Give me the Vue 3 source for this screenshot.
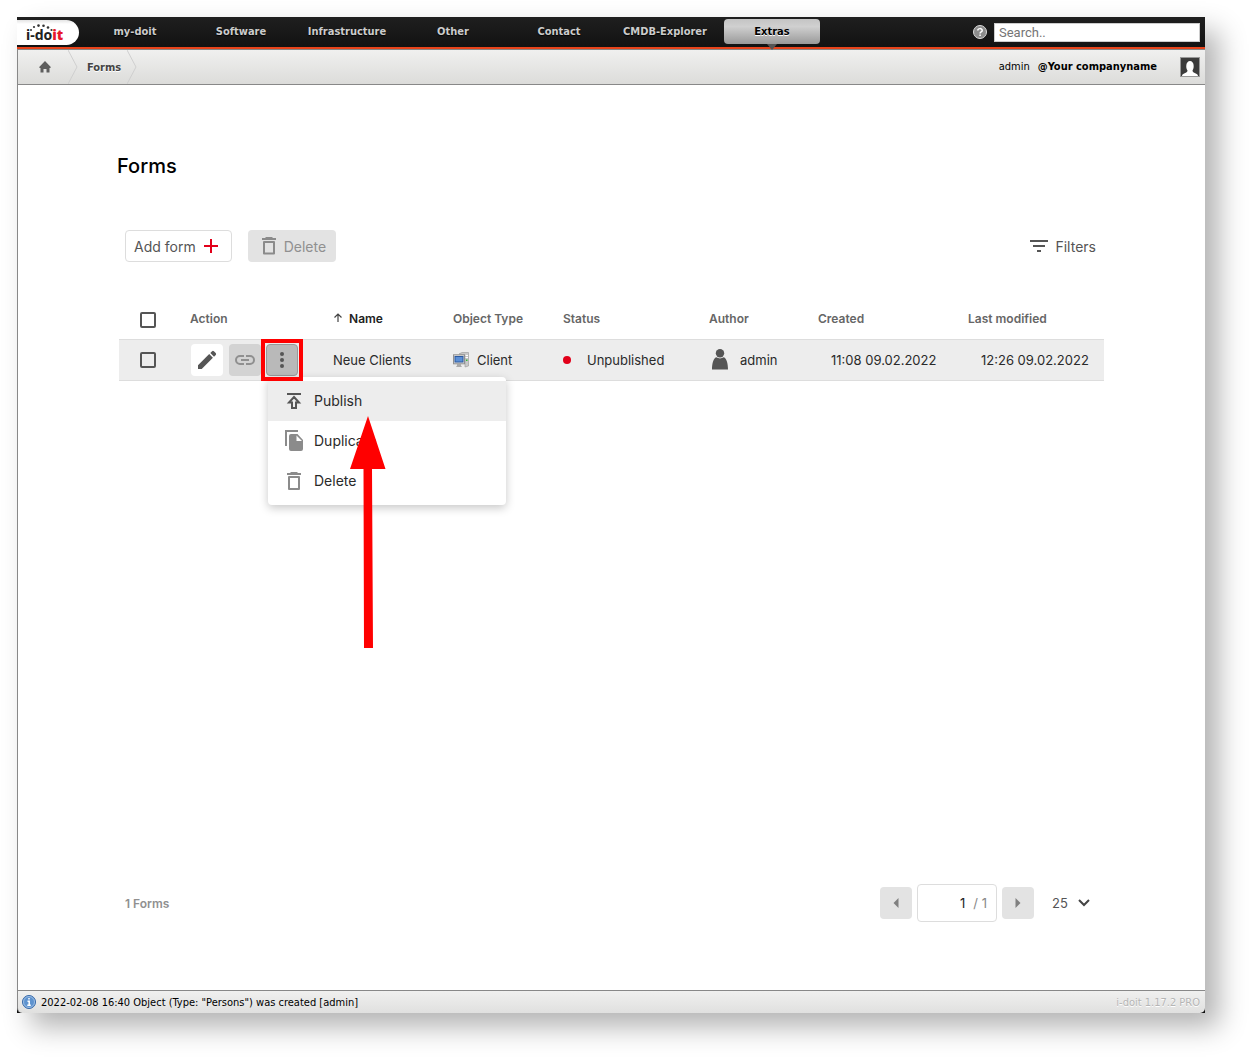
<script setup>
import { ref } from 'vue'

const navItems = ['my-doit', 'Software', 'Infrastructure', 'Other', 'Contact', 'CMDB-Explorer', 'Extras']
const activeItem = 'Extras'

const forms = [
  {
    name: 'Neue Clients',
    type: 'Client',
    status: 'Unpublished',
    author: 'admin',
    created: '11:08 09.02.2022',
    modified: '12:26 09.02.2022',
  },
]

const search = ref('')
const page = ref('1')
const pageSize = ref('25')
const menuOpen = ref(true)
</script>

<template>
  <div class="screen">
    <div class="app">
      <header class="topbar">
        <a class="logo" href="#" aria-label="i-doit">
          <svg class="logo-dots" width="26" height="8" viewBox="0 0 26 8" aria-hidden="true">
            <g fill="#333">
              <circle cx="3" cy="6" r="1" />
              <circle cx="6" cy="3" r="1.1" />
              <circle cx="10.500" cy="1.600" r="1.300" />
              <circle cx="15.500" cy="1.800" r="1.300" />
              <circle cx="20" cy="3.500" r="1.300" />
              <circle cx="23.500" cy="6" r="1.100" />
            </g>
          </svg>
          <span>i-do<b>it</b></span>
        </a>
        <nav class="nav">
          <a v-for="item in navItems" :key="item" href="#" :class="{ active: item === activeItem }">
            <span>{{ item }}</span>
          </a>
        </nav>
        <div class="tools">
          <button class="help" type="button" aria-label="Help">
            <svg width="14" height="14" viewBox="0 0 14 14">
              <circle cx="7" cy="7" r="6.500" fill="#8c8c8c" stroke="#dcdcdc" />
              <path d="M4.800 5.600C4.800 3 9.200 3 9.200 5.400C9.200 7 7.100 6.800 7.100 8.400M7.100 9.600V11" fill="none" stroke="#fff" stroke-width="1.500" />
            </svg>
          </button>
          <input v-model="search" class="search" type="text" placeholder="Search.." aria-label="Search" />
        </div>
      </header>

      <div class="crumbs">
        <a class="home" href="#" aria-label="Home">
          <svg width="12" height="12" viewBox="0 0 12 12">
            <path d="M6 0L12 6.200L11 7H10.500V11.500H7.500V8H4.500V11.500H1.500V7H1L0 6.200Z" fill="#5e5e5e" />
          </svg>
        </a>
        <svg class="sep" width="10" height="34" viewBox="0 0 10 34"><path d="M0 0L9 17L0 34" fill="none" stroke="#cfcfcf" /></svg>
        <a class="crumb" href="#">Forms</a>
        <svg class="sep" width="10" height="34" viewBox="0 0 10 34"><path d="M0 0L9 17L0 34" fill="none" stroke="#cfcfcf" /></svg>
        <div class="user">
          <span>admin</span>
          <strong>@Your companyname</strong>
          <svg width="20" height="20" viewBox="0 0 20 20">
            <rect x="0.500" y="0.500" width="19" height="19" fill="#3c3c3c" stroke="#999" />
            <path d="M2 19C2 16 7.500 16.500 7.500 13.500C5.500 11 5.800 4 10 4S14.500 11 12.500 13.500C12.500 16.500 18 16 18 19Z" fill="#fff" />
          </svg>
        </div>
      </div>

      <main class="main">
        <h1>Forms</h1>

        <div class="actions">
          <button class="btn add" type="button">
            Add form
            <svg width="14" height="14" viewBox="0 0 14 14"><path d="M7 0V14M0 7H14" stroke="#e2001a" stroke-width="2" /></svg>
          </button>
          <button class="btn remove" type="button" disabled>
            <svg width="14" height="18" viewBox="0 0 14 18">
              <path d="M4 0H10L11 1H14V3H0V1H3Z" fill="#8b8b8b" />
              <path d="M2 5H12V16.500H2Z" fill="none" stroke="#8b8b8b" stroke-width="2" stroke-linejoin="round" />
            </svg>
            Delete
          </button>
          <button class="filters" type="button">
            <svg width="18" height="12" viewBox="0 0 18 12"><path d="M0 1H18M3 6H15M7 11H11" stroke="#555" stroke-width="2" /></svg>
            Filters
          </button>
        </div>

        <div class="table-wrap">
          <table class="list">
            <colgroup>
              <col class="c-check" />
              <col class="c-action" />
              <col class="c-name" />
              <col class="c-type" />
              <col class="c-status" />
              <col class="c-author" />
              <col class="c-created" />
              <col />
            </colgroup>
            <thead>
              <tr>
                <th class="check"><input type="checkbox" aria-label="Select all" /></th>
                <th>Action</th>
                <th class="sorted">
                  <svg width="10" height="10" viewBox="0 0 10 10"><path d="M5 9V1M1.500 4.500L5 1L8.500 4.500" fill="none" stroke="#444" stroke-width="1.200" /></svg>
                  Name
                </th>
                <th>Object Type</th>
                <th>Status</th>
                <th>Author</th>
                <th>Created</th>
                <th>Last modified</th>
              </tr>
            </thead>
            <tbody>
              <tr v-for="form in forms" :key="form.name">
                <td class="check"><input type="checkbox" :aria-label="`Select ${form.name}`" /></td>
                <td>
                  <div class="row-actions">
                    <button class="icon-btn edit" type="button" aria-label="Edit">
                      <svg width="20" height="20" viewBox="0 0 20 20">
                        <path d="M1 15.300L12.200 4.100L15.900 7.800L4.700 19H1ZM13.300 3L15.100 1.200Q16 .500 16.900 1.300L18.700 3.100Q19.500 4 18.800 4.900L17 6.700Z" fill="#555" />
                      </svg>
                    </button>
                    <button class="icon-btn link" type="button" aria-label="Link" disabled>
                      <svg width="20" height="10" viewBox="0 0 20 10">
                        <path d="M9 1H5A4 4 0 0 0 5 9H9M11 1H15A4 4 0 0 1 15 9H11M6 5H14" fill="none" stroke="#8f8f8f" stroke-width="2" />
                      </svg>
                    </button>
                    <div class="more">
                      <button class="icon-btn dots" type="button" aria-label="More" @click="menuOpen = !menuOpen">
                        <svg width="4" height="16" viewBox="0 0 4 16"><g fill="#555"><circle cx="2" cy="2" r="2" /><circle cx="2" cy="8" r="2" /><circle cx="2" cy="14" r="2" /></g></svg>
                      </button>
                      <div v-if="menuOpen" class="menu">
                        <button class="hovered" type="button">
                          <svg width="18" height="20" viewBox="0 0 18 20">
                            <path d="M2 3H16" stroke="#555" stroke-width="2" />
                            <path d="M9 6L14 11.500H11V17H7V11.500H4Z" fill="none" stroke="#555" stroke-width="2" />
                          </svg>
                          Publish
                        </button>
                        <button type="button">
                          <svg width="18" height="21" viewBox="0 0 18 21">
                            <path d="M1 16V1H13" fill="none" stroke="#8b8b8b" stroke-width="2" />
                            <path d="M6 4H12.500L18 10V19Q18 21 16 21H6Q4 21 4 19V6Q4 4 6 4ZM11.500 5.500V11H17Z" fill="#8b8b8b" fill-rule="evenodd" />
                          </svg>
                          Duplicate
                        </button>
                        <button type="button">
                          <svg width="18" height="18" viewBox="0 0 18 18">
                            <path d="M6 0H12L13 1H16V3H2V1H5Z" fill="#8b8b8b" />
                            <path d="M4 5H14V17H4Z" fill="none" stroke="#8b8b8b" stroke-width="2" stroke-linejoin="round" />
                          </svg>
                          Delete
                        </button>
                        <svg class="arrow" width="36" height="232" viewBox="0 0 36 232" aria-hidden="true">
                          <path d="M18 0L35.500 53H22L23 232H14L13.500 53H0Z" fill="#f00" />
                        </svg>
                      </div>
                    </div>
                  </div>
                </td>
                <td>{{ form.name }}</td>
                <td>
                  <div class="with-icon type">
                    <svg width="16" height="16" viewBox="0 0 16 16">
                      <path d="M6 2L9 .500H15.500V14L12 15V3Z" fill="#c9c9c9" stroke="#999" stroke-width=".6" />
                      <path d="M12.500 3.500H15M12.500 5.500H15" stroke="#fff" />
                      <rect x=".5" y="2.800" width="11" height="9" fill="#ddd" stroke="#909090" />
                      <rect x="2" y="4.500" width="8" height="5.500" fill="#5b8fd6" stroke="#2c5aa0" />
                      <path d="M4 12H8V13.500L9 15H3L4 13.500Z" fill="#aaa" />
                      <rect x="13" y="7.500" width="1.500" height="1.500" fill="#3b3" />
                    </svg>
                    {{ form.type }}
                  </div>
                </td>
                <td><div class="with-icon status"><i class="dot"></i>{{ form.status }}</div></td>
                <td>
                  <div class="with-icon author">
                    <svg width="16" height="21" viewBox="0 0 16 21">
                      <circle cx="8" cy="4.200" r="4.200" fill="#555" />
                      <path d="M0 20.500C0 15 1.500 9 4.200 8.300Q8 10.500 11.800 8.300C14.500 9 16 15 16 20.500Z" fill="#555" />
                    </svg>
                    {{ form.author }}
                  </div>
                </td>
                <td class="date">{{ form.created }}</td>
                <td class="date">{{ form.modified }}</td>
              </tr>
            </tbody>
          </table>
        </div>

        <div class="list-footer">
          <span class="count">{{ forms.length }} Forms</span>
          <div class="pager">
            <button class="icon-btn step" type="button" aria-label="Previous page" disabled>
              <svg width="6" height="10" viewBox="0 0 6 10"><path d="M5.500 0V10L.5 5Z" fill="#808080" /></svg>
            </button>
            <label class="page-box">
              <input v-model="page" type="text" aria-label="Page" />
              <span>/ 1</span>
            </label>
            <button class="icon-btn step" type="button" aria-label="Next page" disabled>
              <svg width="6" height="10" viewBox="0 0 6 10"><path d="M.5 0V10L5.500 5Z" fill="#808080" /></svg>
            </button>
            <div class="size">
              <select v-model="pageSize" aria-label="Rows per page">
                <option>25</option>
                <option>50</option>
              </select>
              <svg width="12" height="8" viewBox="0 0 12 8"><path d="M1 1L6 6L11 1" fill="none" stroke="#444" stroke-width="2" /></svg>
            </div>
          </div>
        </div>
      </main>

      <footer class="statusbar">
        <svg width="14" height="14" viewBox="0 0 14 14">
          <circle cx="7" cy="7" r="6.500" fill="#5e93cf" stroke="#3568a8" />
          <circle cx="7" cy="7" r="5.500" fill="none" stroke="#b8d0ec" stroke-width=".7" />
          <path d="M7 3V4.600M5.500 6.200H7.200V10.200M5.300 10.300H8.800" fill="none" stroke="#fff" stroke-width="1.500" />
        </svg>
        <span>2022-02-08 16:40 Object (Type: "Persons") was created [admin]</span>
        <span class="version">i-doit 1.17.2 PRO</span>
      </footer>
    </div>
  </div>
</template>

<style>
body {
  background: #fff;
}
</style>

<style scoped>
.screen,
.screen * {
  box-sizing: border-box;
}
.screen {
  display: flex;
  min-height: 100vh;
  padding: 17px 48px 48px 17px;
  font-family: Tahoma, 'DejaVu Sans Condensed', 'DejaVu Sans', sans-serif;
  font-size: 11px;
  color: #000;
}
button,
input,
select {
  font: inherit;
  color: inherit;
  margin: 0;
  padding: 0;
  border: 0;
  background: none;
}
a {
  color: inherit;
  text-decoration: none;
}
svg {
  display: block;
  flex: none;
}
.app {
  flex: 1;
  display: flex;
  flex-direction: column;
  min-width: 0;
  background: #111;
  box-shadow: 14px 14px 26px rgba(0, 0, 0, 0.3);
}

/* top navigation */
.topbar {
  display: flex;
  height: 32px;
  background: linear-gradient(#1f1f1f, #121212);
  border-bottom: 2px solid #e8431a;
}
.logo {
  position: relative;
  width: 62px;
  height: 25px;
  margin-top: 3px;
  padding: 7px 0 0 9px;
  border-radius: 0 13px 13px 0;
  background: linear-gradient(#e4e4e4, #fff 4px);
  font: bold 14px/16px 'Noto Sans', sans-serif;
  color: #222;
}
.logo b {
  color: #e8182c;
}
.logo-dots {
  position: absolute;
  left: 11px;
  top: 4px;
}
.nav {
  display: flex;
  margin-left: 3px;
}
.nav a {
  width: 106px;
  padding-top: 2px;
  font-weight: bold;
  line-height: 26px;
  text-align: center;
  color: #ccc;
  text-shadow: 0 1px 1px #000;
}
.nav a.active {
  padding: 2px 4px 0 6px;
}
.nav .active span {
  position: relative;
  z-index: 1;
  display: block;
  height: 25px;
  border-radius: 4px;
  background: linear-gradient(#c4c4c4, #d0d0d0 30%, #999);
  color: #000;
  text-shadow: 0 1px 0 #fff;
}
.nav .active span::after {
  content: '';
  position: absolute;
  left: 50%;
  top: 100%;
  margin-left: -5px;
  border: 5px solid transparent;
  border-top: 6px solid #555;
}
.tools {
  display: flex;
  align-items: center;
  gap: 7px;
  margin-left: auto;
  padding-right: 5px;
}
.search {
  width: 206px;
  height: 19px;
  padding: 0 4px;
  border: 1px solid #ccc;
  background: #fff;
  font: 13px/17px Roboto, sans-serif;
}
.search::placeholder {
  color: #757575;
  opacity: 1;
}

/* breadcrumbs */
.crumbs {
  display: flex;
  align-items: center;
  height: 36px;
  padding-right: 5px;
  border: 1px solid #888;
  border-right: 0;
  background: linear-gradient(#f0f0ef, #dcdcda);
}
.home {
  padding: 0 17px 0 21px;
}
.crumb {
  width: 49px;
  padding-left: 3px;
  font-weight: bold;
  text-align: center;
  color: #444;
  text-shadow: 0 1px 0 #fff;
}
.user {
  display: flex;
  align-items: center;
  margin-left: auto;
  line-height: 13px;
}
.user span,
.user strong {
  padding-bottom: 1px;
}
.user strong {
  margin: 0 23px 0 8px;
}

/* content */
.main {
  flex: 1;
  display: flex;
  flex-direction: column;
  padding: 67px 101px 68px 99px;
  border-left: 1px solid #888;
  background: #fff;
  font-family: Inter, sans-serif;
  font-size: 13px;
  color: #2a2a2a;
}
h1 {
  margin: 0;
  font-size: 20px;
  font-weight: 500;
  line-height: 28px;
  color: #000;
}
.actions {
  display: flex;
  gap: 16px;
  padding: 50px 8px 36px;
  font-size: 14px;
  color: #555;
}
.btn {
  display: flex;
  align-items: center;
  gap: 8px;
  height: 32px;
  border-radius: 4px;
}
.add {
  padding: 0 13px 0 8px;
  border: 1px solid #ddd;
}
.remove {
  padding: 0 10px 0 14px;
  background: #e3e3e3;
  color: #909090;
}
.filters {
  display: flex;
  align-items: center;
  gap: 7px;
  margin-left: auto;
}
.table-wrap {
  padding-left: 2px;
}
.list {
  width: 100%;
  table-layout: fixed;
  border-collapse: collapse;
}
.c-check {
  width: 71px;
}
.c-action {
  width: 143px;
}
.c-name {
  width: 120px;
}
.c-type {
  width: 110px;
}
.c-status {
  width: 146px;
}
.c-author {
  width: 109px;
}
.c-created {
  width: 150px;
}
th,
td {
  height: 41px;
  padding: 0;
  text-align: left;
  white-space: nowrap;
}
th {
  font-size: 12px;
  font-weight: 600;
  color: #666;
}
td {
  border-top: 1px solid #ddd;
  border-bottom: 1px solid #ddd;
  background: #ededed;
}
.sorted {
  color: #222;
}
.sorted svg {
  display: inline-block;
  margin-right: 3px;
}
.check {
  padding-left: 21px;
}
th.check {
  padding-top: 3px;
}
.check input {
  appearance: none;
  display: block;
  width: 16px;
  height: 16px;
  border: 2px solid #555;
  border-radius: 2px;
}
.row-actions {
  display: flex;
  gap: 6px;
  padding-left: 1px;
}
.icon-btn {
  display: flex;
  align-items: center;
  justify-content: center;
  width: 32px;
  height: 32px;
  border-radius: 4px;
}
.edit {
  background: #fff;
}
.link {
  background: #d3d3d3;
}
.dots {
  border: 1px solid #999;
  background: #b9b9b9;
}
.more {
  position: relative;
  margin-left: -1px;
}
.more::before {
  content: '';
  position: absolute;
  z-index: 3;
  inset: -5px;
  border: 4px solid #f00;
  pointer-events: none;
}
.menu {
  position: absolute;
  z-index: 2;
  top: 33px;
  left: 2px;
  width: 238px;
  padding: 4px 0;
  border-radius: 4px;
  background: #fff;
  box-shadow: 0 3px 10px rgba(0, 0, 0, 0.22);
}
.menu button {
  display: flex;
  align-items: center;
  gap: 11px;
  width: 100%;
  height: 40px;
  padding-left: 17px;
  font-size: 14px;
}
.menu .hovered {
  background: #ededed;
}
.arrow {
  position: absolute;
  left: 82px;
  top: 39px;
  pointer-events: none;
}
.with-icon {
  display: flex;
  align-items: center;
}
.type {
  gap: 8px;
}
.status {
  gap: 16px;
}
.dot {
  width: 8px;
  height: 8px;
  border-radius: 50%;
  background: #e2001a;
}
.author {
  gap: 12px;
  padding-left: 3px;
}
.date {
  padding-left: 13px;
}
.list-footer {
  display: flex;
  align-items: center;
  justify-content: space-between;
  margin-top: auto;
  padding: 0 14px 0 8px;
}
.count {
  font-size: 12px;
  font-weight: 600;
  color: #909090;
}
.pager {
  display: flex;
  align-items: center;
  gap: 5px;
}
.step {
  background: #e3e3e3;
}
.page-box {
  display: flex;
  align-items: center;
  gap: 8px;
  width: 80px;
  height: 38px;
  padding-right: 9px;
  border: 1px solid #ddd;
  border-radius: 4px;
  color: #888;
}
.page-box input {
  flex: 1;
  min-width: 0;
  text-align: right;
  color: #222;
}
.page-box span {
  white-space: nowrap;
}
.size {
  display: flex;
  align-items: center;
  gap: 9px;
  margin-left: 13px;
  color: #555;
}
.size select {
  appearance: none;
}

/* status bar */
.statusbar {
  display: flex;
  align-items: center;
  gap: 5px;
  height: 23px;
  padding: 0 5px 0 4px;
  border-top: 1px solid #888;
  border-left: 1px solid #888;
  border-radius: 0 0 5px 5px;
  background: linear-gradient(#f0f0ef, #e0e0df);
}
.version {
  margin-left: auto;
  color: #b5b5b5;
  text-shadow: 0 1px 0 #fff;
}
</style>
